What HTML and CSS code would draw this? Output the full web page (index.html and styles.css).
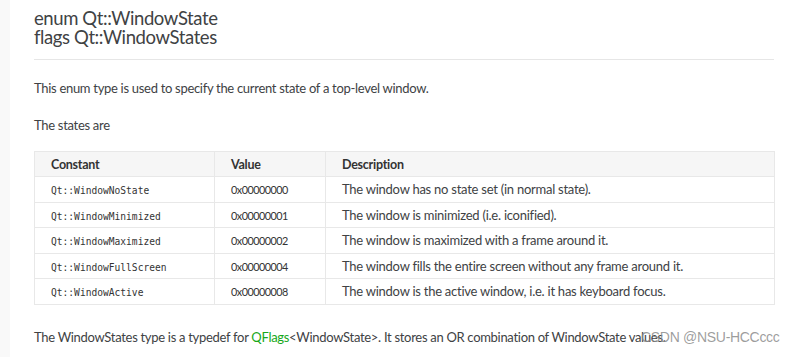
FILE: index.html
```html
<!DOCTYPE html>
<html>
<head>
<meta charset="utf-8">
<link rel="stylesheet" href="styles.css">
</head>
<body>
<div class="page">
  <div class="strip"></div>
  <main class="content">
    <h3 class="title">enum Qt::WindowState<br>flags Qt::WindowStates</h3>
    <hr class="rule">
    <p class="para first">This enum type is used to specify the current state of a top-level window.</p>
    <p class="para">The states are</p>
    <table class="values">
      <thead>
        <tr><th class="c1">Constant</th><th class="c2">Value</th><th class="c3">Description</th></tr>
      </thead>
      <tbody>
        <tr><td><code>Qt::WindowNoState</code></td><td><code class="num">0x00000000</code></td><td>The window has no state set (in normal state).</td></tr>
        <tr><td><code>Qt::WindowMinimized</code></td><td><code class="num">0x00000001</code></td><td>The window is minimized (i.e. iconified).</td></tr>
        <tr><td><code>Qt::WindowMaximized</code></td><td><code class="num">0x00000002</code></td><td>The window is maximized with a frame around it.</td></tr>
        <tr><td><code>Qt::WindowFullScreen</code></td><td><code class="num">0x00000004</code></td><td>The window fills the entire screen without any frame around it.</td></tr>
        <tr><td><code>Qt::WindowActive</code></td><td><code class="num">0x00000008</code></td><td>The window is the active window, i.e. it has keyboard focus.</td></tr>
      </tbody>
    </table>
    <p class="para last">The WindowStates type is a typedef for <a class="link">QFlags</a>&lt;WindowState&gt;. It stores an OR combination of WindowState values.</p>
  </main>
</div>
<div class="watermark">CSDN @NSU-HCCccc</div>
</body>
</html>
```
FILE: styles.css
```css
html, body {
  margin: 0;
  padding: 0;
  background: #ffffff;
}
body {
  width: 790px;
  height: 357px;
  overflow: hidden;
  position: relative;
  font-family: Lato, "Open Sans", sans-serif;
  color: #404244;
}
.page {
  display: flex;
  height: 357px;
}
.strip {
  width: 10px;
  flex: none;
  background: #f9f9f9;
}
.content {
  padding-left: 24px;
  width: 740px;
  flex: none;
}
.title {
  margin: 0;
  padding-top: 9px;
  font-weight: 400;
  font-size: 18.5px;
  line-height: 19px;
  letter-spacing: -0.4px;
  color: #404244;
}
.rule {
  margin: 12px 0 0 0;
  border: 0;
  border-top: 1px solid #e6e6e6;
  height: 0;
}
.para {
  margin: 0;
  font-size: 13px;
  line-height: 18px;
  letter-spacing: -0.3px;
}
.first {
  margin-top: 19px;
}
.para + .para {
  margin-top: 19px;
}
.values {
  margin-top: 17px;
  width: 741px;
  border-collapse: collapse;
  border: 1px solid #e8e8e8;
  font-size: 13px;
  letter-spacing: -0.25px;
}
.values th {
  background: #f6f6f6;
  text-align: left;
  font-weight: 700;
  font-size: 12.5px;
  height: 24px;
  padding: 0 16px;
  border: 1px solid #e8e8e8;
  color: #333333;
}
.values td {
  height: 24.5px;
  padding: 0 16px;
  border: 1px solid #e8e8e8;
}
.c1 { width: 147px; }
.c2 { width: 78px; }
code {
  font-family: "DejaVu Sans Mono", monospace;
  font-size: 9.6px;
  letter-spacing: 0;
  color: #333333;
}
.num {
  font-family: Lato, sans-serif;
  font-size: 10.8px;
  letter-spacing: -0.5px;
}
.last {
  margin-top: 23px;
}
.link {
  color: #17a81a;
}
.watermark {
  position: absolute;
  left: 641px;
  top: 329px;
  white-space: nowrap;
  font-family: "Liberation Sans", Arial, sans-serif;
  font-size: 14px;
  color: rgba(140, 140, 140, 0.85);
  letter-spacing: -0.3px;
}
```
